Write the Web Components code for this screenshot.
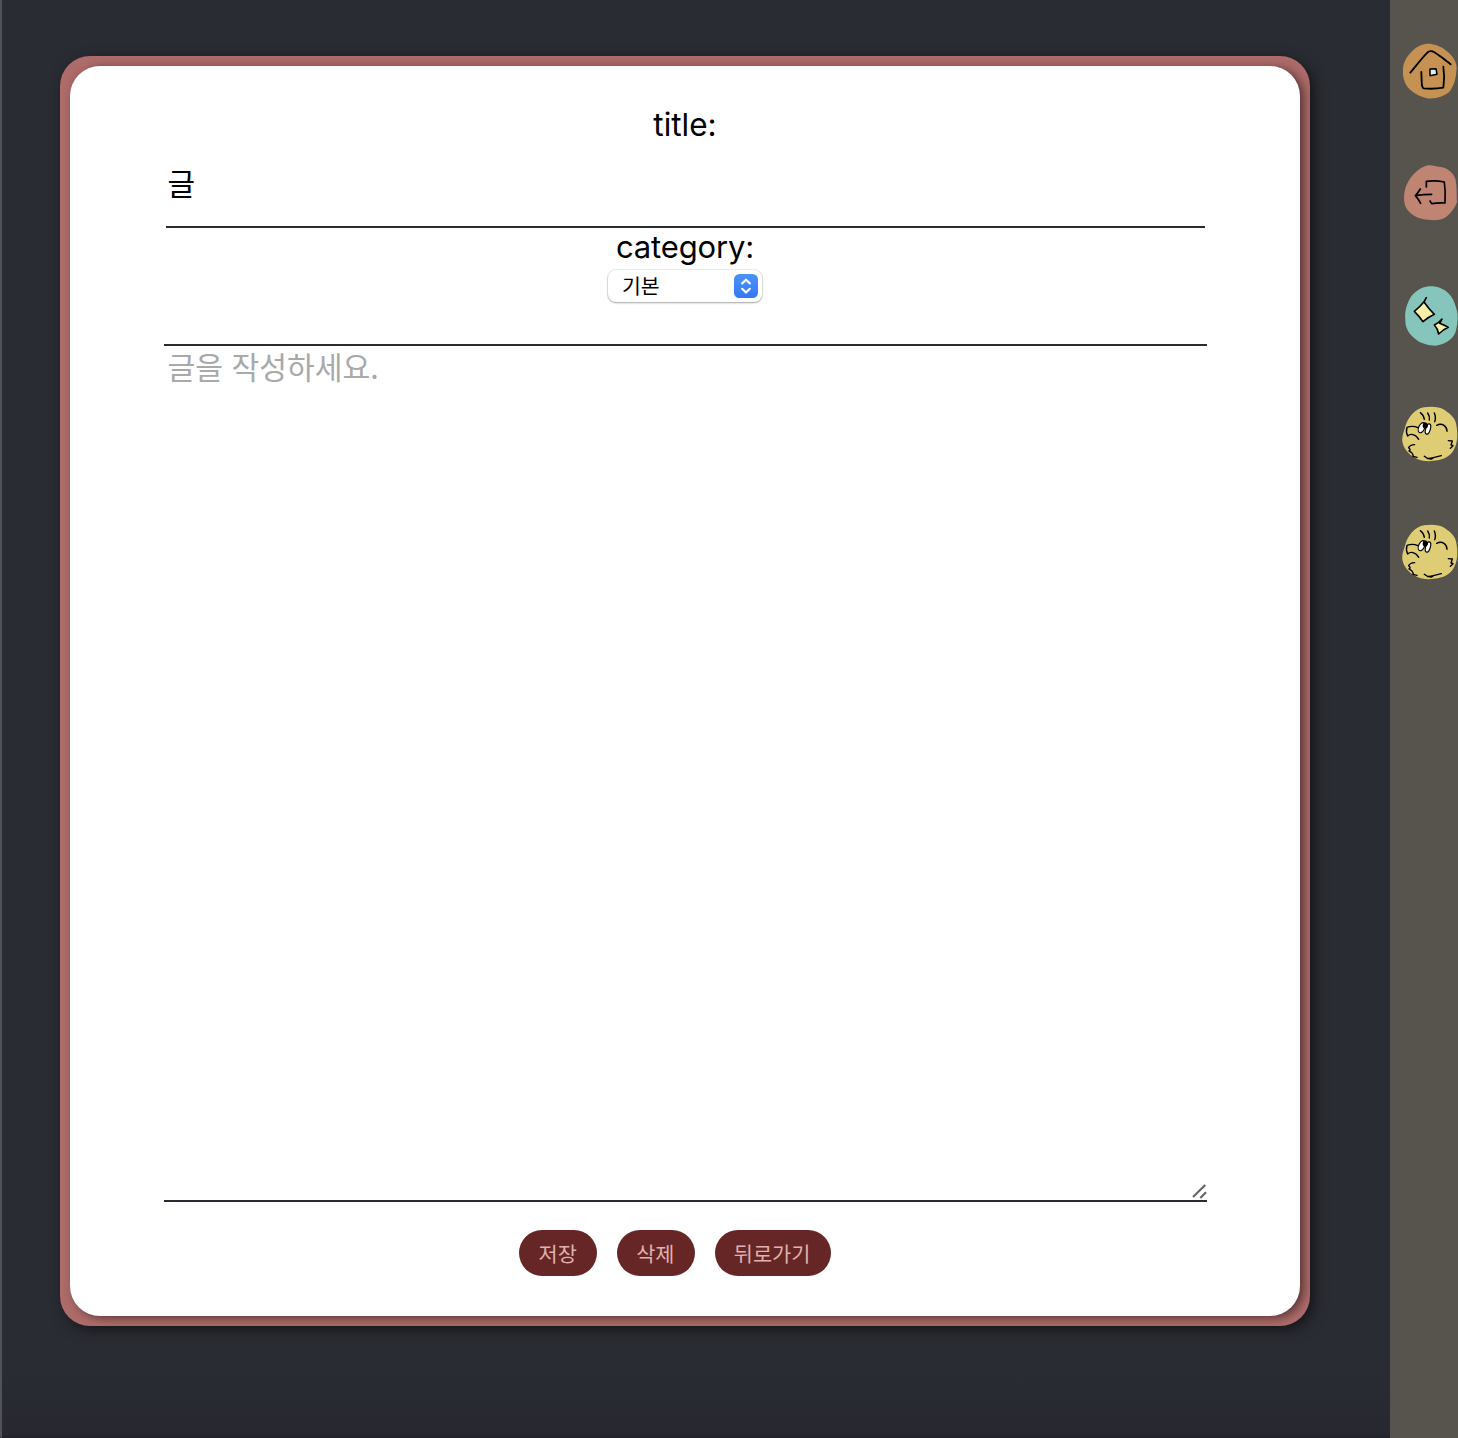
<!DOCTYPE html>
<html lang="ko">
<head>
<meta charset="utf-8">
<title>글 작성</title>
<style>
html,body{margin:0;height:100%}
body{background:#2a2c33;overflow:hidden;font-family:Inter,"Noto Sans CJK KR",sans-serif;color:#000}
</style>
</head>
<body>
<app-shell>
  <post-card>
    <form-label>title:</form-label>
    <title-field>글</title-field>
    <form-label class="cat">category:</form-label>
    <category-select>기본</category-select>
    <text-area>글을 작성하세요.</text-area>
    <button-row>
      <pill-button>저장</pill-button>
      <pill-button>삭제</pill-button>
      <pill-button>뒤로가기</pill-button>
    </button-row>
  </post-card>
  <side-bar slot="side">
    <side-icon name="home"></side-icon>
    <side-icon name="exit" style="margin-top:45px"></side-icon>
    <side-icon name="stars" style="margin-top:40px"></side-icon>
    <side-icon name="face" style="margin-top:40px"></side-icon>
    <side-icon name="face" style="margin-top:38px"></side-icon>
  </side-bar>
</app-shell>
<script>
const define = (name, css, html = '<slot></slot>') => customElements.define(name, class extends HTMLElement {
  constructor() {
    super();
    this.attachShadow({mode: 'open'}).innerHTML = `<style>:host,*{box-sizing:border-box}${css}</style>${html}`;
  }
});

define('app-shell', `
:host{display:flex;width:1458px;height:1438px;background:linear-gradient(180deg,#2a2c33 0,#2a2c33 1370px,#272830 1434px,#222329 1438px)}
.edge{width:2px;height:1438px;background:#505358;border-bottom-left-radius:8px}
main{flex:1;padding:56px 0 0 58px}`,
`<div class="edge"></div><main><slot></slot></main><slot name="side"></slot>`);

define('post-card', `
:host{display:block;width:1250px;height:1270px;padding:10px;border-radius:30px;background:#ad6b69;box-shadow:4px 4px 14px rgba(0,0,0,.5)}
.page{display:flex;flex-direction:column;align-items:center;height:1250px;border-radius:30px;background:#fff;padding-top:38px;box-shadow:4px 2px 10px rgba(0,0,0,.5)}`,
`<div class="page"><slot></slot></div>`);

define('form-label', `
:host{display:block;height:42px;font-size:31.5px;line-height:42px;text-align:center}
:host(.cat){margin-top:-2px;line-height:41px;letter-spacing:-.15px;font-size:31px}`);

define('title-field', `
:host{display:block;width:1039px;height:82px;padding:15px 2px 0 2px;border-bottom:2px solid #2a2c33;font:30px/42px "Noto Sans CJK KR",sans-serif}`);

define('category-select', `
:host{display:flex;align-items:center;justify-content:space-between;width:154px;height:32px;margin-top:2px;padding:0 4px 0 14px;border-radius:8px;background:#fff;box-shadow:0 0 1px 1px rgba(0,0,0,.08),0 1px 2px rgba(0,0,0,.3);font:20.5px/30px "Noto Sans CJK KR",sans-serif}
span{height:32px}
svg{display:block}`,
`<span><slot></slot></span><svg width="24" height="24" viewBox="0 0 24 24"><defs><linearGradient id="g" x2="0" y2="1"><stop stop-color="#4b93fb"/><stop offset="1" stop-color="#3478f6"/></linearGradient></defs><rect width="24" height="24" rx="5.5" fill="url(#g)"/><path d="M8.2 9.4 12 5.7l3.8 3.7M8.2 14.8l3.8 3.7 3.8-3.7" fill="none" stroke="#fff" stroke-width="2.2" stroke-linecap="round" stroke-linejoin="round"/></svg>`);

define('text-area', `
:host{display:flex;justify-content:space-between;width:1043px;height:858px;margin-top:42px;padding:0 0 0 4px;border:solid #2a2c33;border-width:2px 0;font:30.2px/41px "Noto Sans CJK KR",sans-serif;color:#a9a9a9}
svg{align-self:flex-end}`,
`<span><slot></slot></span><svg width="16" height="16" viewBox="0 0 16 16"><path d="M2 13 14.3 1M9.3 14 15 8.3" stroke="#646464" stroke-width="2.1" fill="none"/></svg>`);

define('button-row', `:host{display:flex;gap:20px;margin-top:28px;margin-right:20px}`);

define('pill-button', `
:host{display:block;height:46px;padding:0 20.2px 0 19.14px;border-radius:23px;background:#672626;color:#dfb1af;font:20.8px/46px "Noto Sans CJK KR",sans-serif}`);

define('side-bar', `:host{display:flex;flex-direction:column;width:68px;height:1438px;padding-top:30px;background:#56544d}`);

const art = {
home: `<path fill="#c69254" d="M112 42C128 39 154 46 171 59C189 73 204 87 206 112C205 134 202 158 191 175C183 194 156 203 137 205C117 208 87 197 70 182C54 169 43 147 45 123C44 106 51 88 62 75C75 60 89 46 112 42Z"/>
<g fill="none" stroke="#000" stroke-width="5.5" stroke-linecap="round" stroke-linejoin="round"><path d="M67 128C84 108 101 84 119 67Q128 60 138 66L161 82L188 103"/><path d="M100 126L101 152Q101 170 106 175Q137 178 166 173Q171 141 166 110"/><path fill="#def1ef" stroke-width="4.5" d="M126 117L144 116L147 133L126 137Z"/></g>`,
exit: `<path fill="#c08473" d="M120 31C132 29 146 35 159 36C176 39 195 51 201 69C208 91 205 120 207 141C199 163 181 186 160 193C142 198 121 195 105 192C80 189 57 170 51 151C45 130 48 103 60 81C73 59 93 38 120 31Z"/>
<g fill="none" stroke="#000" stroke-width="5" stroke-linecap="round" stroke-linejoin="round"><path d="M115 96L115 79Q142 75 169 81Q173 111 171 144Q150 143 131 146L126 138"/><path d="M131 118Q106 118 82 122M97 102Q90 114 82 122Q91 132 98 145"/></g>`,
stars: `<path fill="#85c5bb" d="M123 34C141 33 162 38 177 51C195 66 201 85 207 108C211 128 209 150 202 173C192 195 169 208 143 212C119 212 93 204 75 186C59 171 51 153 52 133C49 109 58 82 70 64C83 48 101 36 123 34Z"/>
<g fill="#f5efa8" stroke="#000" stroke-width="4.8" stroke-linecap="round" stroke-linejoin="round"><path d="M115 68L108 81Q121 100 139 118Q118 128 105 140Q93 123 79 109Q96 95 108 80Z"/><path d="M162 132L155 145Q170 151 181 157Q165 164 152 177Q149 160 139 150Q151 145 162 132Z"/></g>`,
face: `<path fill="#dfcd75" d="M108 37C130 34 155 35 171 46C186 57 202 68 205 90C209 112 210 137 201 157C193 179 173 192 149 196C126 200 101 200 82 189C62 179 46 161 43 139C41 123 50 105 53 91C62 65 82 41 108 37Z"/>
<g fill="none" stroke="#000" stroke-width="4.2" stroke-linecap="round" stroke-linejoin="round"><path d="M97 53Q107 60 109 73M119 54Q126 64 124 75M139 54Q145 68 140 80"/><path d="M90 98Q74 91 57 97Q53 111 59 123Q66 116 75 119Q86 122 92 133"/><path d="M146 91Q158 84 168 91Q177 97 177 109"/><path d="M80 149Q66 150 62 158Q70 165 63 168L71 173Q77 180 75 184L87 187"/><path d="M109 184Q119 193 131 192L136 188L160 182M119 191L133 189"/><path d="M181 137L193 138L189 150Q197 150 194 154L187 160"/></g>
<ellipse cx="101" cy="98" rx="9" ry="16" transform="rotate(24 101 98)" fill="#fff" stroke="#000" stroke-width="3.5"/><ellipse cx="120" cy="102" rx="7" ry="16" transform="rotate(16 120 102)" fill="#fff" stroke="#000" stroke-width="3.5"/><path d="M106 84Q113 79 119 87Q123 94 117 99Q110 103 106 99Q102 92 106 84Z" fill="#000"/>`
};
customElements.define('side-icon', class extends HTMLElement {
  constructor() { super(); this.attachShadow({mode: 'open'}); }
  connectedCallback() {
    this.shadowRoot.innerHTML = `<style>:host{display:block;height:80px}svg{display:block}</style><svg width="68" height="80" viewBox="6 0 204 240">${art[this.getAttribute('name')]}</svg>`;
  }
});
</script>
</body>
</html>
